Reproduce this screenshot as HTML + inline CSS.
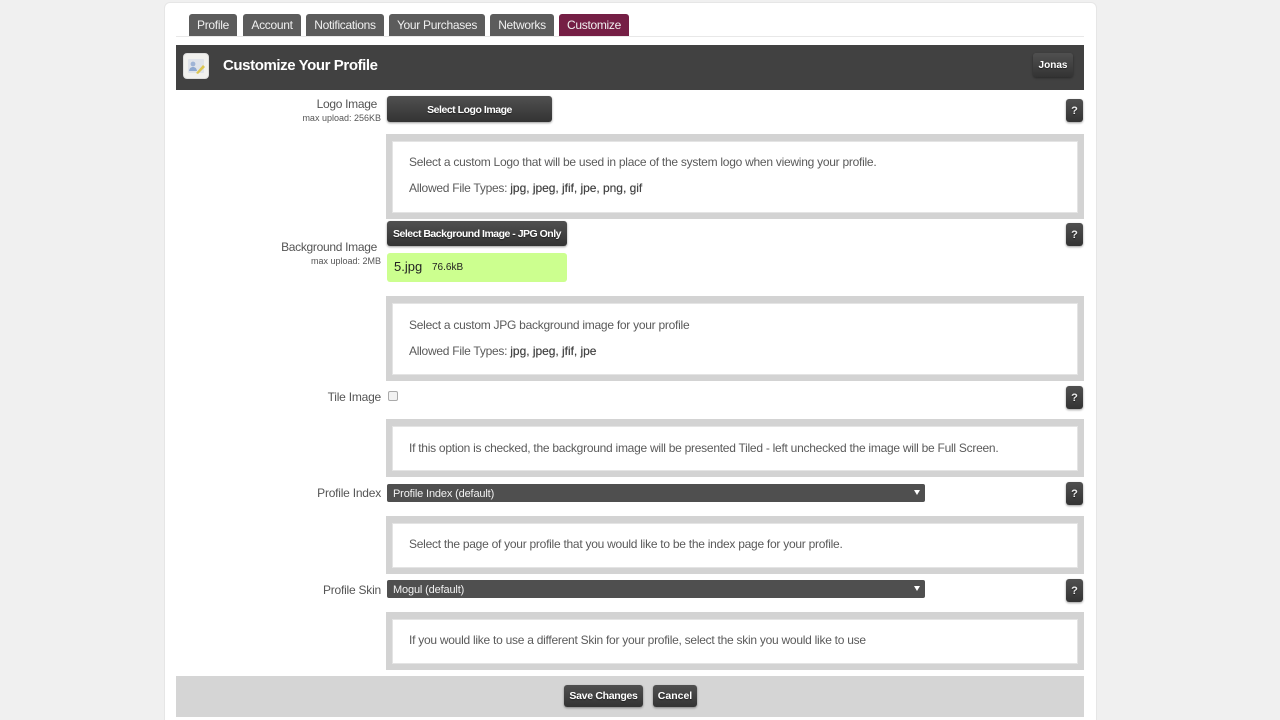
<!DOCTYPE html>
<html lang="en">
<head>
<meta charset="utf-8">
<title>Customize Your Profile</title>
<style>
html,body{margin:0;padding:0;width:1280px;height:720px;overflow:hidden;background:#f0f0f0;}
body{position:relative;font-family:"Liberation Sans",Arial,sans-serif;color:#555;font-size:12px;}
div,span{position:absolute;white-space:nowrap;box-sizing:border-box;}
#card{left:164px;top:2px;width:933px;height:730px;background:#fff;border:1px solid #e6e6e6;border-radius:6px;}
.tab{top:14px;height:22px;background:#5c5c5c;color:#f0f0f0;border-radius:3px 3px 0 0;font-size:12px;line-height:22px;text-align:center;letter-spacing:-.3px;}
.tab.on{background:#751f45;}
#rule{left:176px;top:36px;width:908px;height:1px;background:#e8e8e8;}
#head{left:176px;top:45px;width:908px;height:45px;background:#414141;}
#title{left:223px;top:56px;font-size:15px;line-height:20px;font-weight:bold;color:#fff;letter-spacing:-.41px;}
#ico{left:183px;top:53px;width:26px;height:26px;border-radius:4px;background:#f1f1ee;border:1px solid #ddd;}
.btn{background:linear-gradient(#505050,#333);color:#fff;font-weight:bold;font-size:11px;text-align:center;border-radius:3px;box-shadow:0 1px 2px rgba(0,0,0,.4);text-shadow:0 1px 1px rgba(0,0,0,.5);}
.q{left:1066px;width:17px;height:23px;line-height:25px;font-size:11px;color:#eee;}
.lab{font-size:12px;line-height:14px;text-align:right;color:#555;letter-spacing:-.22px;}
.sm{font-size:9px;line-height:11px;text-align:right;color:#555;}
.box{left:386px;width:698px;background:#fff;border:6px solid #d3d3d3;border-top-width:7px;box-shadow:inset 0 0 0 1px #e4e4e4;}
.t{left:409px;font-size:12px;line-height:14px;color:#5a5a5a;letter-spacing:-.26px;}
.t b{font-weight:normal;color:#444;letter-spacing:-.03px;text-shadow:0 0 .4px #444;}
.sel{left:387px;width:538px;height:18px;background:#4f4f4f;border-radius:2px;color:#f2f2f2;font-size:11px;line-height:20px;padding-left:6px;letter-spacing:-.15px;}
.sel i{position:absolute;left:527px;top:6px;width:0;height:0;border-left:3px solid transparent;border-right:3px solid transparent;border-top:5px solid #fff;}
#cb{left:388px;top:391px;width:10px;height:10px;border:1px solid #aaa;border-radius:2px;background:#f2f2f2;}
#file{left:387px;top:253px;width:180px;height:29px;background:#ccff8f;border-radius:3px;color:#222;}
#foot{left:176px;top:676px;width:908px;height:41px;background:#d5d5d5;}
</style>
</head>
<body>
<div id="card"></div>

<div class="tab" style="left:189px;width:48px">Profile</div>
<div class="tab" style="left:243px;width:58px">Account</div>
<div class="tab" style="left:306px;width:78px">Notifications</div>
<div class="tab" style="left:389px;width:96px">Your Purchases</div>
<div class="tab" style="left:490px;width:64px">Networks</div>
<div class="tab on" style="left:559px;width:70px">Customize</div>
<div id="rule"></div>

<div id="head"></div>
<div id="ico">
<svg width="24" height="24" viewBox="0 0 24 24" style="display:block">
<rect x="4" y="5" width="16" height="14" rx="1" fill="#dfe3ea"/>
<circle cx="9" cy="10" r="2.4" fill="#9fb4d6"/>
<path d="M5 17c.5-3 2-4 4-4s3.500 1 4 4z" fill="#8ea8d0"/>
<path d="M12 19l7-8 2 2-7 7z" fill="#dcc650"/>
</svg>
</div>
<div id="title">Customize Your Profile</div>
<div class="btn" style="left:1033px;top:53px;width:40px;height:24px;line-height:25px;font-size:10px">Jonas</div>

<div class="lab" style="left:280px;width:97px;top:97px;letter-spacing:-.3px">Logo Image</div>
<div class="sm" style="left:260px;width:121px;top:113px">max upload: 256KB</div>
<div class="btn" style="left:387px;top:96px;width:165px;height:26px;line-height:28px;font-size:10.500px;letter-spacing:-.47px">Select Logo Image</div>
<div class="btn q" style="top:99px">?</div>
<div class="box" style="top:134px;height:85px"></div>
<div class="t" style="top:155px">Select a custom Logo that will be used in place of the system logo when viewing your profile.</div>
<div class="t" style="top:181px">Allowed File Types: <b>jpg, jpeg, jfif, jpe, png, gif</b></div>

<div class="lab" style="left:260px;width:117px;top:240px;letter-spacing:-.3px">Background Image</div>
<div class="sm" style="left:260px;width:121px;top:256px">max upload: 2MB</div>
<div class="btn" style="left:387px;top:221px;width:180px;height:25px;line-height:26px;font-size:10.500px;letter-spacing:-.5px">Select Background Image - JPG Only</div>
<div class="btn q" style="top:223px">?</div>
<div id="file"><span style="left:7px;top:6px;font-size:13px;line-height:16px">5.jpg</span><span style="left:45px;top:8px;font-size:10px;line-height:13px">76.6kB</span></div>
<div class="box" style="top:296px;height:85px"></div>
<div class="t" style="top:318px">Select a custom JPG background image for your profile</div>
<div class="t" style="top:344px">Allowed File Types: <b>jpg, jpeg, jfif, jpe</b></div>

<div class="lab" style="left:280px;width:101px;top:390px">Tile Image</div>
<div id="cb"></div>
<div class="btn q" style="top:386px">?</div>
<div class="box" style="top:419px;height:58px"></div>
<div class="t" style="top:441px">If this option is checked, the background image will be presented Tiled - left unchecked the image will be Full Screen.</div>

<div class="lab" style="left:280px;width:101px;top:486px">Profile Index</div>
<div class="sel" style="top:484px">Profile Index (default)<i></i></div>
<div class="btn q" style="top:482px">?</div>
<div class="box" style="top:516px;height:58px"></div>
<div class="t" style="top:537px">Select the page of your profile that you would like to be the index page for your profile.</div>

<div class="lab" style="left:280px;width:101px;top:583px">Profile Skin</div>
<div class="sel" style="top:580px">Mogul (default)<i></i></div>
<div class="btn q" style="top:579px">?</div>
<div class="box" style="top:612px;height:58px"></div>
<div class="t" style="top:633px">If you would like to use a different Skin for your profile, select the skin you would like to use</div>

<div id="foot"></div>
<div class="btn" style="left:564px;top:685px;width:79px;height:22px;line-height:22px;font-size:10.500px;letter-spacing:-.3px">Save Changes</div>
<div class="btn" style="left:653px;top:685px;width:44px;height:22px;line-height:22px;font-size:10.500px">Cancel</div>
</body>
</html>
